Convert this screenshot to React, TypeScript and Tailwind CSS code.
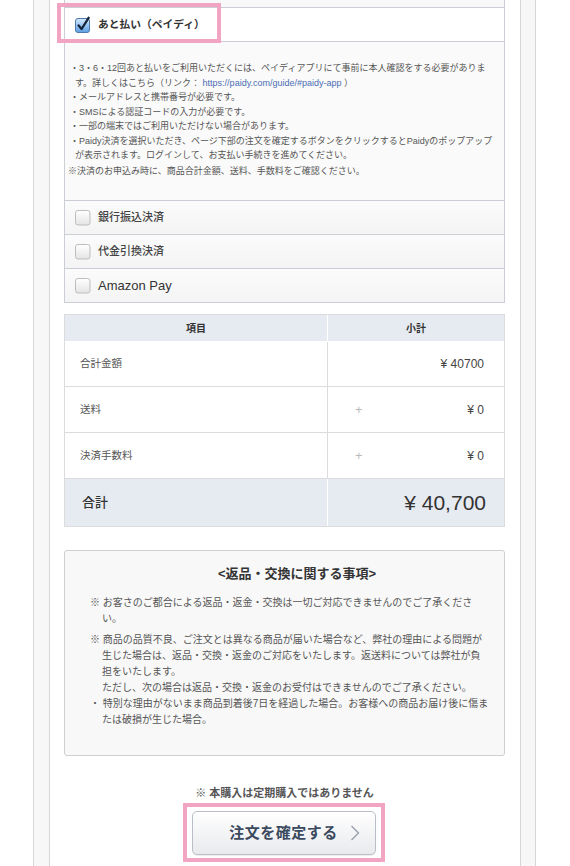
import React from 'react';

const font = "font-['Liberation_Sans','Noto_Sans_CJK_JP',sans-serif]";

function CheckedBox() {
  return (
    <svg width="16" height="17" viewBox="0 0 16 17" className="shrink-0">
      <defs>
        <linearGradient id="cbOn" x1="0" y1="0" x2="0" y2="1">
          <stop offset="0" stopColor="#d6ebfd" />
          <stop offset="1" stopColor="#5b9fe6" />
        </linearGradient>
      </defs>
      <rect x="0.5" y="2.5" width="14" height="14" rx="2.5" fill="url(#cbOn)" stroke="#4f79a8" />
      <path d="M3.6 9.4 L6.6 13 L13.6 1.8" stroke="#17243a" strokeWidth="2.3" fill="none" strokeLinecap="round" strokeLinejoin="round" />
    </svg>
  );
}

function EmptyBox() {
  return (
    <svg width="16" height="16" viewBox="0 0 16 16" className="shrink-0">
      <defs>
        <linearGradient id="cbOff" x1="0" y1="0" x2="0" y2="1">
          <stop offset="0" stopColor="#ffffff" />
          <stop offset="1" stopColor="#e4e4e4" />
        </linearGradient>
      </defs>
      <rect x="0.5" y="0.5" width="14.5" height="14.5" rx="2.5" fill="url(#cbOff)" stroke="#bdbdbd" />
    </svg>
  );
}

function OptionRow({ label, latin }: { label: string; latin?: boolean }) {
  return (
    <div className="flex h-[34px] items-center gap-[7px] border-b border-[#cbcfd5] bg-gradient-to-b from-[#fbfbfb] to-[#f4f4f4] pl-[10px]">
      <EmptyBox />
      <span className={latin ? 'text-[13px] font-medium text-[#333]' : 'text-[11px] font-medium text-[#444]'}>{label}</span>
    </div>
  );
}

const paidyLines: { text: React.ReactNode; indent?: boolean }[] = [
  { text: '・3・6・12回あと払いをご利用いただくには、ペイディアプリにて事前に本人確認をする必要がありま' },
  {
    text: (
      <>
        す。詳しくはこちら（リンク： <span className="text-[#4a6db3]">https://paidy.com/guide/#paidy-app</span> ）
      </>
    ),
    indent: true,
  },
  { text: '・メールアドレスと携帯番号が必要です。' },
  { text: '・SMSによる認証コードの入力が必要です。' },
  { text: '・一部の端末ではご利用いただけない場合があります。' },
  { text: '・Paidy決済を選択いただき、ページ下部の注文を確定するボタンをクリックするとPaidyのポップアップ' },
  { text: 'が表示されます。ログインして、お支払い手続きを進めてください。', indent: true },
];

const noticeLines: { text: string; indent?: boolean; gap?: boolean }[] = [
  { text: '※ お客さのご都合による返品・返金・交換は一切ご対応できませんのでご了承くださ' },
  { text: 'い。', indent: true },
  { text: '※ 商品の品質不良、ご注文とは異なる商品が届いた場合など、弊社の理由による問題が', gap: true },
  { text: '生じた場合は、返品・交換・返金のご対応をいたします。返送料については弊社が負', indent: true },
  { text: '担をいたします。', indent: true },
  { text: 'ただし、次の場合は返品・交換・返金のお受付はできませんのでご了承ください。', indent: true },
  { text: '・ 特別な理由がないまま商品到着後7日を経過した場合。お客様への商品お届け後に傷ま' },
  { text: 'たは破損が生じた場合。', indent: true },
];

function Row({ label, value, plus, h }: { label: string; value: string; plus?: boolean; h: string }) {
  return (
    <div className={`grid grid-cols-[263px_1fr] border-b border-[#dcdcdc] ${h}`}>
      <div className="flex items-center border-r border-[#dcdcdc] pl-[15px] text-[10.5px] text-[#555]">{label}</div>
      <div className="flex items-center justify-between pl-[27px] pr-[20px]">
        <span className="text-[13px] font-light text-[#bbb]">{plus ? '+' : ''}</span>
        <span className="text-[12px] text-[#444]">{value}</span>
      </div>
    </div>
  );
}

export default function App() {
  return (
    <div className={`h-[866px] overflow-hidden bg-white ${font}`}>
      <div className="ml-[33px] h-full w-[503px] border-x border-[#d6d6d6] bg-[#f7f7f7] pl-[15px] pr-[14px]">
        <div className="relative h-full border-x border-[#d6d6d6] bg-white pl-[14px] pr-[15px]">
          {/* payment methods */}
          <div className="border-x border-[#cbcfd5]">
            <div className="h-[8px] border-b border-[#cbcfd5] bg-[#f8f8f8]" />
            <div className="flex h-[34px] items-center gap-[7px] border-b border-[#cbcfd5] bg-white pl-[10px]">
              <CheckedBox />
              <span className="text-[10.75px] font-bold text-[#333]">あと払い（ペイディ）</span>
            </div>
            <div className="h-[159px] border-b border-[#cbcfd5] bg-[#fafafa] pl-[5px] pt-[19px] text-[9px] leading-[14.5px] text-[#555]">
              {paidyLines.map((l, i) => (
                <div key={i} className={`whitespace-nowrap ${l.indent ? 'pl-[5px]' : ''}`}>
                  {l.text}
                </div>
              ))}
              <div className="-ml-[2px] mt-[1.5px] whitespace-nowrap">※決済のお申込み時に、商品合計金額、送料、手数料をご確認ください。</div>
            </div>
            <OptionRow label="銀行振込決済" />
            <OptionRow label="代金引換決済" />
            <OptionRow label="Amazon Pay" latin />
          </div>

          {/* pink highlight over paidy row */}
          <div className="pointer-events-none absolute left-[7px] top-[3px] h-[40px] w-[164px] border-4 border-[#f2a5c3]" />

          {/* totals */}
          <div className="mt-[11px] border border-[#dcdcdc]">
            <div className="grid h-[27px] grid-cols-[263px_1fr] border-b border-white bg-[#e6eaf1] text-[10px] font-bold text-[#333]">
              <div className="flex items-center justify-center border-r border-white">項目</div>
              <div className="flex items-center justify-center">小計</div>
            </div>
            <Row label="合計金額" value="¥ 40700" h="h-[45px]" />
            <Row label="送料" value="¥ 0" plus h="h-[46px]" />
            <Row label="決済手数料" value="¥ 0" plus h="h-[46px]" />
            <div className="grid h-[47px] grid-cols-[263px_1fr] bg-[#e6eaf1]">
              <div className="flex items-center border-r border-white pl-[17px] text-[13px] font-medium text-[#333]">合計</div>
              <div className="flex items-center justify-end pr-[18px] text-[21px] font-medium text-[#333]">¥ 40,700</div>
            </div>
          </div>

          {/* notice */}
          <div className="mt-[23px] h-[206px] rounded-[3px] border border-[#cfcfcf] bg-[#f8f8f8] pl-[25px] pt-[15px]">
            <div className="text-center text-[13px] font-bold leading-[16px] text-[#333]">&lt;返品・交換に関する事項&gt;</div>
            <div className="mt-[13px] text-[10px] leading-[16px] text-[#555]">
              {noticeLines.map((l, i) => (
                <div key={i} className={`whitespace-nowrap ${l.indent ? 'pl-[12px]' : ''} ${l.gap ? 'mt-[5px]' : ''}`}>
                  {l.text}
                </div>
              ))}
            </div>
          </div>

          {/* confirm */}
          <div className="mt-[30px] text-center text-[11px] font-semibold leading-[14px] text-[#555]">※ 本購入は定期購入ではありません</div>
          <div className="mt-[3px] flex justify-center">
            <div className="ml-[-2px] border-4 border-[#f2a5c3] bg-white px-[5px] pb-[3px] pt-[4px]">
              <button className="relative flex h-[44px] w-[184px] items-center justify-center rounded-[5px] border border-[#b9bec6] bg-gradient-to-b from-[#ffffff] to-[#e8eaed] shadow-[0_1px_1px_rgba(0,0,0,0.08)]">
                <span className="text-[15px] font-bold tracking-[0.5px] text-[#3b4a5f]">注文を確定する</span>
                <svg width="10" height="16" viewBox="0 0 10 16" className="absolute right-[15px] top-[13px]">
                  <path d="M1.5 1 L8.5 8 L1.5 15" stroke="#9aa1ab" strokeWidth="1.4" fill="none" />
                </svg>
              </button>
            </div>
          </div>
        </div>
      </div>
    </div>
  );
}
